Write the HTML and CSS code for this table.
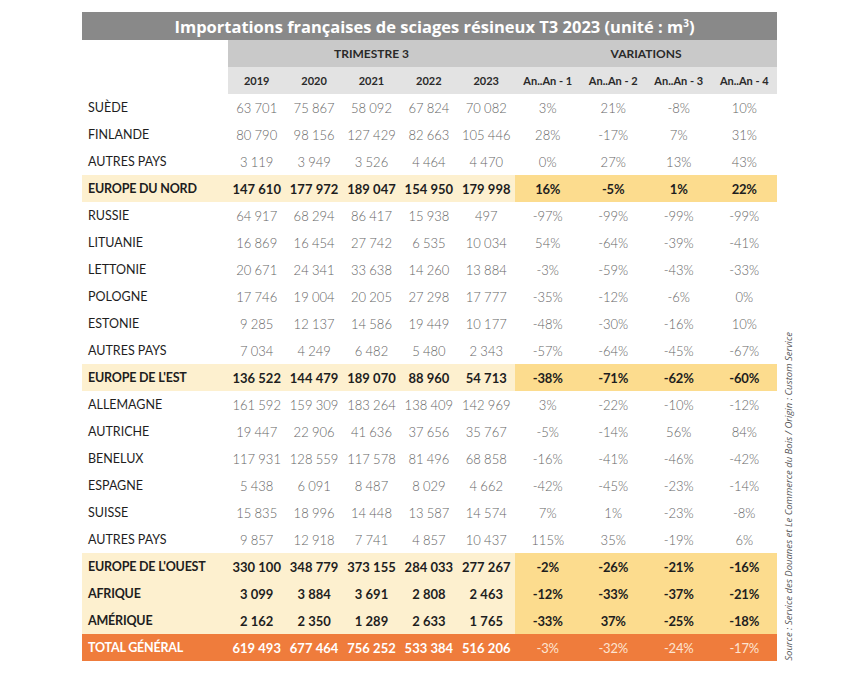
FILE: index.html
```html
<!DOCTYPE html>
<html lang="fr">
<head>
<meta charset="utf-8">
<title>Importations françaises de sciages résineux T3 2023</title>
<link rel="stylesheet" href="styles.css">
</head>
<body>
<div class="page">
  <table class="imports">
    <colgroup>
      <col class="c-label">
      <col class="c-year"><col class="c-year"><col class="c-year"><col class="c-year"><col class="c-year">
      <col class="c-var"><col class="c-var"><col class="c-var"><col class="c-var">
    </colgroup>
    <thead>
      <tr class="title-row"><th colspan="10">Importations françaises de sciages résineux T3 2023 (unité : m<sup>3</sup>)</th></tr>
      <tr class="group-row"><th class="blank"></th><th colspan="5">TRIMESTRE 3</th><th colspan="4">VARIATIONS</th></tr>
      <tr class="sub-row"><th class="blank"></th><th>2019</th><th>2020</th><th>2021</th><th>2022</th><th>2023</th><th>An..An - 1</th><th>An..An - 2</th><th>An..An - 3</th><th>An..An - 4</th></tr>
    </thead>
    <tbody>
      <tr><td>SUÈDE</td><td>63&#8239;701</td><td>75&#8239;867</td><td>58&#8239;092</td><td>67&#8239;824</td><td>70&#8239;082</td><td>3%</td><td>21%</td><td>-8%</td><td>10%</td></tr>
      <tr><td>FINLANDE</td><td>80&#8239;790</td><td>98&#8239;156</td><td>127&#8239;429</td><td>82&#8239;663</td><td>105&#8239;446</td><td>28%</td><td>-17%</td><td>7%</td><td>31%</td></tr>
      <tr><td>AUTRES PAYS</td><td>3&#8239;119</td><td>3&#8239;949</td><td>3&#8239;526</td><td>4&#8239;464</td><td>4&#8239;470</td><td>0%</td><td>27%</td><td>13%</td><td>43%</td></tr>
      <tr class="sub"><td>EUROPE DU NORD</td><td>147&#8239;610</td><td>177&#8239;972</td><td>189&#8239;047</td><td>154&#8239;950</td><td>179&#8239;998</td><td class="v">16%</td><td class="v">-5%</td><td class="v">1%</td><td class="v">22%</td></tr>
      <tr><td>RUSSIE</td><td>64&#8239;917</td><td>68&#8239;294</td><td>86&#8239;417</td><td>15&#8239;938</td><td>497</td><td>-97%</td><td>-99%</td><td>-99%</td><td>-99%</td></tr>
      <tr><td>LITUANIE</td><td>16&#8239;869</td><td>16&#8239;454</td><td>27&#8239;742</td><td>6&#8239;535</td><td>10&#8239;034</td><td>54%</td><td>-64%</td><td>-39%</td><td>-41%</td></tr>
      <tr><td>LETTONIE</td><td>20&#8239;671</td><td>24&#8239;341</td><td>33&#8239;638</td><td>14&#8239;260</td><td>13&#8239;884</td><td>-3%</td><td>-59%</td><td>-43%</td><td>-33%</td></tr>
      <tr><td>POLOGNE</td><td>17&#8239;746</td><td>19&#8239;004</td><td>20&#8239;205</td><td>27&#8239;298</td><td>17&#8239;777</td><td>-35%</td><td>-12%</td><td>-6%</td><td>0%</td></tr>
      <tr><td>ESTONIE</td><td>9&#8239;285</td><td>12&#8239;137</td><td>14&#8239;586</td><td>19&#8239;449</td><td>10&#8239;177</td><td>-48%</td><td>-30%</td><td>-16%</td><td>10%</td></tr>
      <tr><td>AUTRES PAYS</td><td>7&#8239;034</td><td>4&#8239;249</td><td>6&#8239;482</td><td>5&#8239;480</td><td>2&#8239;343</td><td>-57%</td><td>-64%</td><td>-45%</td><td>-67%</td></tr>
      <tr class="sub"><td>EUROPE DE L'EST</td><td>136&#8239;522</td><td>144&#8239;479</td><td>189&#8239;070</td><td>88&#8239;960</td><td>54&#8239;713</td><td class="v">-38%</td><td class="v">-71%</td><td class="v">-62%</td><td class="v">-60%</td></tr>
      <tr><td>ALLEMAGNE</td><td>161&#8239;592</td><td>159&#8239;309</td><td>183&#8239;264</td><td>138&#8239;409</td><td>142&#8239;969</td><td>3%</td><td>-22%</td><td>-10%</td><td>-12%</td></tr>
      <tr><td>AUTRICHE</td><td>19&#8239;447</td><td>22&#8239;906</td><td>41&#8239;636</td><td>37&#8239;656</td><td>35&#8239;767</td><td>-5%</td><td>-14%</td><td>56%</td><td>84%</td></tr>
      <tr><td>BENELUX</td><td>117&#8239;931</td><td>128&#8239;559</td><td>117&#8239;578</td><td>81&#8239;496</td><td>68&#8239;858</td><td>-16%</td><td>-41%</td><td>-46%</td><td>-42%</td></tr>
      <tr><td>ESPAGNE</td><td>5&#8239;438</td><td>6&#8239;091</td><td>8&#8239;487</td><td>8&#8239;029</td><td>4&#8239;662</td><td>-42%</td><td>-45%</td><td>-23%</td><td>-14%</td></tr>
      <tr><td>SUISSE</td><td>15&#8239;835</td><td>18&#8239;996</td><td>14&#8239;448</td><td>13&#8239;587</td><td>14&#8239;574</td><td>7%</td><td>1%</td><td>-23%</td><td>-8%</td></tr>
      <tr><td>AUTRES PAYS</td><td>9&#8239;857</td><td>12&#8239;918</td><td>7&#8239;741</td><td>4&#8239;857</td><td>10&#8239;437</td><td>115%</td><td>35%</td><td>-19%</td><td>6%</td></tr>
      <tr class="sub"><td>EUROPE DE L'OUEST</td><td>330&#8239;100</td><td>348&#8239;779</td><td>373&#8239;155</td><td>284&#8239;033</td><td>277&#8239;267</td><td class="v">-2%</td><td class="v">-26%</td><td class="v">-21%</td><td class="v">-16%</td></tr>
      <tr class="sub"><td>AFRIQUE</td><td>3&#8239;099</td><td>3&#8239;884</td><td>3&#8239;691</td><td>2&#8239;808</td><td>2&#8239;463</td><td class="v">-12%</td><td class="v">-33%</td><td class="v">-37%</td><td class="v">-21%</td></tr>
      <tr class="sub"><td>AMÉRIQUE</td><td>2&#8239;162</td><td>2&#8239;350</td><td>1&#8239;289</td><td>2&#8239;633</td><td>1&#8239;765</td><td class="v">-33%</td><td class="v">37%</td><td class="v">-25%</td><td class="v">-18%</td></tr>
      <tr class="total"><td>TOTAL GÉNÉRAL</td><td>619&#8239;493</td><td>677&#8239;464</td><td>756&#8239;252</td><td>533&#8239;384</td><td>516&#8239;206</td><td class="v">-3%</td><td class="v">-32%</td><td class="v">-24%</td><td class="v">-17%</td></tr>
    </tbody>
  </table>
  <p class="source">Source : Service des Douanes et Le Commerce du Bois / Origin : Custom Service</p>
</div>
</body>
</html>
```
FILE: styles.css
```css
html, body {
  margin: 0;
  padding: 0;
  background: #ffffff;
}
body {
  font-family: "Lato", "Liberation Sans", sans-serif;
  color: #222222;
}
.page {
  display: flex;
  align-items: flex-end;
  padding: 12px 0 0 82px;
  gap: 6px;
}
.imports {
  border-collapse: collapse;
  border-spacing: 0;
  table-layout: fixed;
  width: 695px;
}
.c-label { width: 146px; }
.c-year { width: 57.4px; }
.c-var { width: 65.5px; }

.imports th, .imports td {
  padding: 0;
  text-align: center;
  white-space: nowrap;
}
.title-row th {
  background: #898989;
  color: #ffffff;
  font-family: "Open Sans", "Liberation Sans", sans-serif;
  font-size: 16.5px;
  font-weight: 700;
  height: 28px;
  padding-left: 10px;
}
.title-row sup {
  font-size: 10px;
  line-height: 0;
  vertical-align: 6px;
}
.group-row th {
  background: #c9c9c9;
  font-size: 12px;
  font-weight: 700;
  height: 27px;
  color: #2a2a2a;
}
.sub-row th {
  background: #e3e3e3;
  font-size: 11px;
  font-weight: 700;
  height: 27px;
  color: #2a2a2a;
}
.group-row th.blank, .sub-row th.blank {
  background: #ffffff;
}
.imports td {
  height: 27px;
  font-size: 13px;
  font-weight: 300;
  color: #666666;
}
.imports td:first-child {
  text-align: left;
  padding-left: 6px;
  font-weight: 400;
  color: #1e1e1e;
  font-size: 12.5px;
}
.imports tr.sub td {
  background: #fdf0cf;
  font-weight: 700;
  color: #1e1e1e;
  letter-spacing: -0.2px;
}
.imports tr.sub td.v {
  background: #fcdc8e;
}
.imports tr.total td {
  background: #ef7c3c;
  color: #ffffff;
  font-weight: 700;
  letter-spacing: -0.2px;
}
.imports tr.total td.v {
  font-weight: 400;
  color: #fde4d2;
}
.source {
  margin: 0;
  writing-mode: vertical-rl;
  transform: rotate(180deg);
  font-family: "Open Sans", "Liberation Sans", sans-serif;
  font-style: italic;
  font-size: 9.5px;
  color: #555555;
  line-height: 12px;
}
```
